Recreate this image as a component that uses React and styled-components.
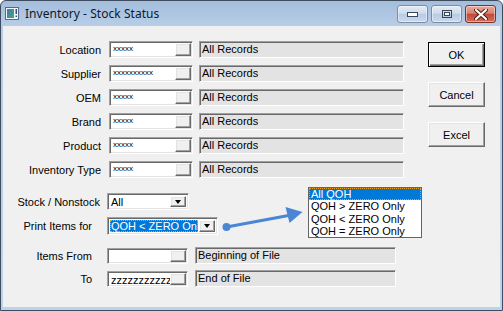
import React from "react";
import styled, { createGlobalStyle } from "styled-components";

const Global = createGlobalStyle`
  html, body { margin: 0; padding: 0; background: #fff; }
  body { font-family: "Liberation Sans", Arial, sans-serif; }
  * { box-sizing: border-box; }
`;

const Window = styled.div`
  width: 503px;
  height: 311px;
  border: 1px solid #3e4c5e;
  border-radius: 6px 6px 0 0;
  background: linear-gradient(#a3bddc 0px, #b7cde7 24px, #bdd3ec 100%);
  display: flex;
  flex-direction: column;
  padding: 0 2px 3px 2px;
  overflow: hidden;
`;

const TitleBar = styled.div`
  height: 25px;
  display: flex;
  align-items: center;
  padding: 0 4px 1px 2px;
  flex: none;
`;

const TitleText = styled.span`
  font-family: "Noto Sans", "Segoe UI", sans-serif;
  font-size: 12px;
  color: #0b1a2b;
  margin-left: 6px;
  letter-spacing: 0.05px;
  margin-top: 1px;
`;

const TitleButtons = styled.div`
  margin-left: auto;
  display: flex;
  gap: 3px;
  align-self: flex-start;
  margin-top: 4px;
`;

const CapButton = styled.div`
  width: ${(p) => (p.$close ? 31 : 31)}px;
  height: 18px;
  border-radius: 3px;
  border: 1px solid ${(p) => (p.$close ? "#7a3329" : "#7b8ca3")};
  background: ${(p) =>
    p.$close
      ? "linear-gradient(#e8a99c 0%, #d98371 45%, #c5493a 52%, #cf6e5e 100%)"
      : "linear-gradient(#e3ebf6 0%, #cfdced 45%, #b9cce4 52%, #c9daee 100%)"};
  box-shadow: inset 0 0 0 1px rgba(255, 255, 255, 0.45);
  display: flex;
  align-items: center;
  justify-content: center;
`;

const Client = styled.div`
  flex: 1;
  background: #f0f0f0;
  position: relative;
  display: flex;
`;

const Form = styled.div`
  display: flex;
  flex-direction: column;
  padding-top: 15px;
`;

const TopRows = styled.div`
  display: flex;
  flex-direction: column;
  gap: 7px;
`;

const BottomRows = styled.div`
  display: flex;
  flex-direction: column;
  margin-top: 15px;
`;

const Row = styled.div`
  display: flex;
  align-items: center;
  height: ${(p) => p.$h || 17}px;
  margin-top: ${(p) => p.$mt || 0}px;
`;

const Label = styled.div`
  width: ${(p) => p.$w}px;
  margin-right: ${(p) => p.$gap}px;
  text-align: right;
  font-size: 11px;
  color: #000;
  white-space: nowrap;
  flex: none;
`;

const sunken = `
  border: 1px solid;
  border-color: #a0a0a0 #ffffff #ffffff #a0a0a0;
  box-shadow: inset 1px 1px 0 #696969, inset -1px -1px 0 #e3e3e3;
`;

const raised = `
  border: 1px solid;
  border-color: #ffffff #696969 #696969 #ffffff;
  box-shadow: inset -1px -1px 0 #a0a0a0, inset 1px 1px 0 #e3e3e3;
  background: #f0f0f0;
`;

const Lookup = styled.div`
  width: ${(p) => p.$w}px;
  height: ${(p) => p.$h || 17}px;
  ${sunken}
  background: #fff;
  display: flex;
  padding: 2px;
  flex: none;
`;

const LookupText = styled.div`
  flex: 1;
  overflow: hidden;
  white-space: nowrap;
  font-size: ${(p) => (p.$small ? 8 : 11)}px;
  line-height: ${(p) => (p.$small ? 9 : 12)}px;
  padding-left: 1px;
  color: #000;
`;

const LookupBtn = styled.div`
  width: 16px;
  height: 100%;
  margin: -1px -1px -1px 0;
  height: calc(100% + 2px);
  ${raised}
  flex: none;
`;

const Desc = styled.div`
  width: ${(p) => p.$w}px;
  height: ${(p) => p.$h || 17}px;
  margin-left: ${(p) => p.$ml}px;
  ${sunken}
  background: #e3e3e3;
  font-size: 11px;
  line-height: 14px;
  padding-left: 2px;
  color: #000;
  white-space: nowrap;
  flex: none;
`;

const Select = styled.div`
  width: ${(p) => p.$w}px;
  height: ${(p) => p.$h}px;
  ${sunken}
  background: #fff;
  display: flex;
  padding: 2px;
  flex: none;
`;

const SelectValue = styled.div`
  flex: 1;
  overflow: hidden;
  white-space: nowrap;
  font-size: 11px;
  line-height: 12px;
  padding-left: 1px;
  color: ${(p) => (p.$sel ? "#fff" : "#000")};
  background: ${(p) => (p.$sel ? "#0078d7" : "transparent")};
  outline: ${(p) => (p.$sel ? "1px dotted #f0a020" : "none")};
  outline-offset: -1px;
  margin-right: 1px;
`;

const SelectBtn = styled.div`
  width: 16px;
  flex: none;
  margin: 0;
  ${raised}
  display: flex;
  align-items: center;
  justify-content: center;
`;

const Caret = styled.div`
  width: 0;
  height: 0;
  border-left: 3.5px solid transparent;
  border-right: 3.5px solid transparent;
  border-top: 4px solid #000;
`;

const ButtonCol = styled.div`
  margin-left: auto;
  margin-right: 15px;
  padding-top: 16px;
  display: flex;
  flex-direction: column;
  gap: 15px;
`;

const PushButton = styled.div`
  width: 57px;
  height: 25px;
  ${raised}
  ${(p) =>
    p.$default
      ? `border: 1px solid #000; box-shadow: inset 1px 1px 0 #fff, inset -1px -1px 0 #696969, inset -2px -2px 0 #a0a0a0;`
      : ""}
  display: flex;
  align-items: center;
  justify-content: center;
  font-size: 11px;
  color: #000;
`;

const DropList = styled.div`
  position: absolute;
  left: 305px;
  top: 161px;
  width: 114px;
  height: 51px;
  background: #fff;
  border: 1px solid #646464;
  padding: 0;
`;

const DropItem = styled.div`
  height: 12.25px;
  line-height: 12px;
  font-size: 11px;
  padding-left: 2px;
  white-space: nowrap;
  color: ${(p) => (p.$sel ? "#fff" : "#000")};
  background: ${(p) => (p.$sel ? "#0078d7" : "transparent")};
  outline: ${(p) => (p.$sel ? "1px dotted #f0a020" : "none")};
  outline-offset: -1px;
`;

const Overlay = styled.svg`
  position: absolute;
  left: 0;
  top: 0;
  width: 100%;
  height: 100%;
  pointer-events: none;
`;

function AppIcon() {
  return (
    <svg width="14" height="13" viewBox="0 0 14 13">
      <rect x="0.5" y="0.5" width="13" height="12" fill="#f4f6f8" stroke="#5d6b78" />
      <defs>
        <linearGradient id="g1" x1="0" y1="0" x2="1" y2="1">
          <stop offset="0" stopColor="#3a7bbf" />
          <stop offset="1" stopColor="#4aa66a" />
        </linearGradient>
      </defs>
      <rect x="2" y="2" width="7" height="9" fill="url(#g1)" />
      <rect x="10.5" y="2" width="1.5" height="5" fill="#2a4f9a" />
      <rect x="10.5" y="8.5" width="1.5" height="1.5" fill="#2a4f9a" />
    </svg>
  );
}

export default function App() {
  const top = [
    ["Location", "xxxxx"],
    ["Supplier", "xxxxxxxxxx"],
    ["OEM", "xxxxx"],
    ["Brand", "xxxxx"],
    ["Product", "xxxxx"],
    ["Inventory Type", "xxxxx"],
  ];
  return (
    <>
      <Global />
      <Window>
        <TitleBar>
          <AppIcon />
          <TitleText>Inventory - Stock Status</TitleText>
          <TitleButtons>
            <CapButton>
              <svg width="11" height="5" viewBox="0 0 11 5">
                <rect x="0.5" y="0.5" width="10" height="4" fill="#fff" stroke="#3a4657" />
              </svg>
            </CapButton>
            <CapButton>
              <svg width="10" height="8" viewBox="0 0 10 8">
                <rect x="0.5" y="0.5" width="9" height="7" fill="none" stroke="#3a4657" />
                <rect x="2.5" y="2.5" width="5" height="3" fill="#fff" stroke="#3a4657" />
              </svg>
            </CapButton>
            <CapButton $close>
              <svg width="14" height="11" viewBox="0 0 14 11">
                <path d="M2 1 L12 10 M12 1 L2 10" stroke="#4a1a14" strokeWidth="4" strokeLinecap="round" />
                <path d="M2 1 L12 10 M12 1 L2 10" stroke="#fff" strokeWidth="2.2" strokeLinecap="round" />
              </svg>
            </CapButton>
          </TitleButtons>
        </TitleBar>
        <Client>
          <Form>
            <TopRows>
              {top.map(([l, v]) => (
                <Row key={l}>
                  <Label $w={98} $gap={8}>{l}</Label>
                  <Lookup $w={84}>
                    <LookupText $small>{v}</LookupText>
                    <LookupBtn />
                  </Lookup>
                  <Desc $w={205} $ml={6}>All Records</Desc>
                </Row>
              ))}
            </TopRows>
            <BottomRows>
              <Row $h={17}>
                <Label $w={97} $gap={7}>Stock / Nonstock</Label>
                <Select $w={82} $h={17}>
                  <SelectValue>All</SelectValue>
                  <SelectBtn><Caret /></SelectBtn>
                </Select>
              </Row>
              <Row $h={18} $mt={7}>
                <Label $w={89} $gap={15}>Print Items for</Label>
                <Select $w={111} $h={18}>
                  <SelectValue $sel>QOH &lt; ZERO Only</SelectValue>
                  <SelectBtn><Caret /></SelectBtn>
                </Select>
              </Row>
              <Row $h={17} $mt={12}>
                <Label $w={89} $gap={15}>Items From</Label>
                <Lookup $w={81} $h={16}>
                  <LookupText></LookupText>
                  <LookupBtn />
                </Lookup>
                <Desc $w={201} $ml={7}>Beginning of File</Desc>
              </Row>
              <Row $h={17} $mt={6}>
                <Label $w={89} $gap={15}>To</Label>
                <Lookup $w={81} $h={16}>
                  <LookupText>zzzzzzzzzzzzzzz</LookupText>
                  <LookupBtn />
                </Lookup>
                <Desc $w={201} $ml={7}>End of File</Desc>
              </Row>
            </BottomRows>
          </Form>
          <ButtonCol>
            <PushButton $default>OK</PushButton>
            <PushButton>Cancel</PushButton>
            <PushButton>Excel</PushButton>
          </ButtonCol>
          <Overlay viewBox="0 0 496 281">
            <line x1="223" y1="201" x2="285" y2="189.5" stroke="#4a86d4" strokeWidth="3" />
            <circle cx="223" cy="201" r="4" fill="#4a86d4" />
            <polygon points="282,181 286,197 299,186" fill="#4a86d4" />
          </Overlay>
          <DropList>
            <DropItem $sel>All QOH</DropItem>
            <DropItem>QOH &gt; ZERO Only</DropItem>
            <DropItem>QOH &lt; ZERO Only</DropItem>
            <DropItem>QOH = ZERO Only</DropItem>
          </DropList>
        </Client>
      </Window>
    </>
  );
}
